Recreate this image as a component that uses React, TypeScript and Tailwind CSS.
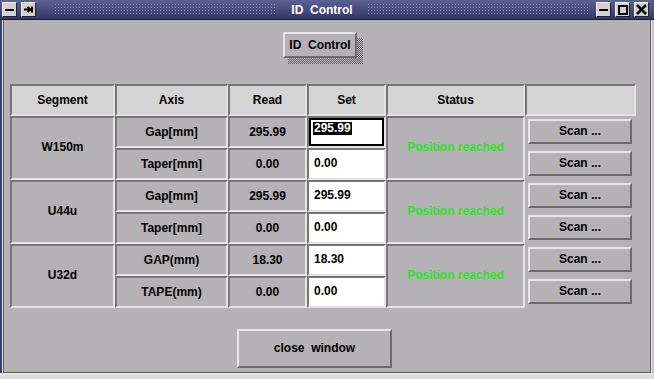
import React from "react";

const font = "font-['Liberation_Sans',Arial,sans-serif] font-bold text-[12px]";

function Cell({ children, header, span, className = "" }: { children?: React.ReactNode, header?: boolean, span?: boolean, className?: string }) {
    return (
        <div
            className={`border-2 border-t-[#767676] border-l-[#767676] border-b-[#e4e4e4] border-r-[#e4e4e4] flex items-center justify-center ${header ? "bg-[#d4d4d4]" : "bg-[#b4b2b4]"} ${span ? "row-span-2" : ""} ${className}`}>
            {children}
        </div>
    );
}

function SetCell({ value, focused }: { value: string, focused?: boolean }) {
    return (
        <div className="border-2 border-t-[#767676] border-l-[#767676] border-b-[#e4e4e4] border-r-[#e4e4e4] bg-white">
            {focused ? (
                <div className="h-full border-2 border-black flex items-start pl-[2px] pt-[2px]">
                    <span className="bg-black text-white leading-[13px] px-[1px]">{value}</span>
                </div>
            ) : (
                <div className="h-full flex items-center pl-[5px] pb-[2px]">{value}</div>
            )}
        </div>
    );
}

function TkButton({ children, className = "" }: { children: React.ReactNode, className?: string }) {
    return (
        <div
            className={`border-2 border-t-[#e6e6e6] border-l-[#e6e6e6] border-b-[#6c6c6c] border-r-[#6c6c6c] bg-[#b4b2b4] flex items-center justify-center ${className}`}>
            {children}
        </div>
    );
}

function ScanCell() {
    return (
        <div className="pl-[3px] pt-[3px]">
            <TkButton className="w-[104px] h-[25px] pb-[2px]">Scan ...</TkButton>
        </div>
    );
}

function TitleButton({ children }: { children: React.ReactNode }) {
    return (
        <div className="w-[15px] h-[15px] bg-[#d2d2d2] border border-t-[#f0f0f0] border-l-[#f0f0f0] border-b-[#202030] border-r-[#202030] flex items-center justify-center">
            {children}
        </div>
    );
}

const dots = "bg-[image:radial-gradient(circle,#8d91bb_0.7px,transparent_0.9px)] bg-size-[3px_3px]";

const groups = [
    { seg: "W150m", rows: [["Gap[mm]", "295.99", "295.99"], ["Taper[mm]", "0.00", "0.00"]] },
    { seg: "U44u", rows: [["Gap[mm]", "295.99", "295.99"], ["Taper[mm]", "0.00", "0.00"]] },
    { seg: "U32d", rows: [["GAP(mm)", "18.30", "18.30"], ["TAPE(mm)", "0.00", "0.00"]] },
];

export default function App() {
    return (
        <div className={`w-[654px] h-[379px] bg-[#d6d6d6] flex flex-col text-black ${font}`}>
            {/* title bar */}
            <div className="h-[20px] bg-gradient-to-b from-[#5d6191] to-[#33366a] border-b border-[#1a1a2a] flex items-center pl-[2px] pr-[5px] gap-[4px]">
                <TitleButton>
                    <div className="w-[9px] h-[2px] bg-black"/>
                </TitleButton>
                <TitleButton>
                    <svg width="11" height="9" viewBox="0 0 11 9">
                        <path d="M1 4.5h6M4.5 2l3 2.5-3 2.5M9 1.5v6" stroke="black" strokeWidth="2" fill="none"/>
                    </svg>
                </TitleButton>
                <div className={`flex-1 h-[13px] ml-[14px] ${dots}`}/>
                <div className="text-white whitespace-pre px-[10px]">ID  Control</div>
                <div className={`flex-1 h-[13px] mr-[2px] ${dots}`}/>
                <TitleButton>
                    <div className="w-[9px] h-[2px] bg-black"/>
                </TitleButton>
                <TitleButton>
                    <div className="w-[10px] h-[10px] border-2 border-black"/>
                </TitleButton>
                <TitleButton>
                    <svg width="11" height="11" viewBox="0 0 11 11">
                        <path d="M1 1l9 9M10 1l-9 9" stroke="black" strokeWidth="2.5"/>
                    </svg>
                </TitleButton>
            </div>

            <div className="flex flex-1">
                <div className="w-[4px] flex">
                    <div className="w-[2px] bg-[#3a3d68]"/>
                    <div className="w-[1px] bg-[#e8e8e8]"/>
                    <div className="w-[1px] bg-[#5a5a5a]"/>
                </div>

                <div className="flex-1 bg-[#b4b2b4] border-r border-b border-[#5a5a5a] flex flex-col">
                    {/* top button with stippled shadow */}
                    <div className="pl-[279px] pt-[12px]">
                        <div className="relative w-[74px] h-[26px]">
                            <div className="absolute left-[5px] top-[6px] w-[75px] h-[26px] bg-[image:repeating-conic-gradient(#6a6a6a_0%_25%,#b4b2b4_0%_50%)] bg-size-[2px_2px]"/>
                            <TkButton className="relative w-[74px] h-[26px] whitespace-pre">ID  Control</TkButton>
                        </div>
                    </div>

                    {/* table */}
                    <div className="ml-[6px] mt-[26px] grid grid-cols-[105px_113px_79px_79px_139px_111px] grid-rows-[repeat(7,32px)] w-[626px]">
                        <Cell header>Segment</Cell>
                        <Cell header>Axis</Cell>
                        <Cell header>Read</Cell>
                        <Cell header>Set</Cell>
                        <Cell header>Status</Cell>
                        <Cell header/>
                        {groups.map((g, gi) => (
                            <React.Fragment key={g.seg}>
                                <Cell span className="pb-[2px]">{g.seg}</Cell>
                                <Cell>{g.rows[0][0]}</Cell>
                                <Cell>{g.rows[0][1]}</Cell>
                                <SetCell value={g.rows[0][2]} focused={gi === 0}/>
                                <Cell span className="text-[#2fe02f] pb-[2px]">Position reached</Cell>
                                <ScanCell/>
                                <Cell>{g.rows[1][0]}</Cell>
                                <Cell>{g.rows[1][1]}</Cell>
                                <SetCell value={g.rows[1][2]}/>
                                <ScanCell/>
                            </React.Fragment>
                        ))}
                    </div>

                    <div className="pl-[233px] mt-[21px]">
                        <TkButton className="w-[155px] h-[39px] whitespace-pre pb-[2px]">close  window</TkButton>
                    </div>
                </div>

                <div className="w-[3px] flex">
                    <div className="w-[1px] bg-[#e8e8e8]"/>
                    <div className="w-[2px] bg-[#c4c4c4]"/>
                </div>
            </div>
            <div className="h-[6px] bg-[#dcdcdc] border-t border-[#eeeeee]"/>
        </div>
    );
}
